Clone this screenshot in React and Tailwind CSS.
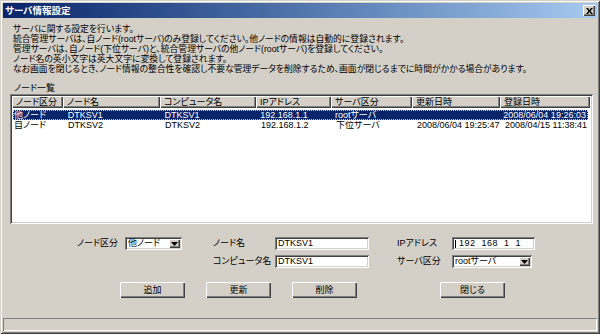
import React from 'react';

const raised = "shadow-[inset_1px_1px_0_#ffffff,inset_-1px_-1px_0_#404040,inset_-2px_-2px_0_#808080]";
const sunken = "shadow-[inset_1px_1px_0_#808080,inset_-1px_-1px_0_#ffffff,inset_2px_2px_0_#404040,inset_-2px_-2px_0_#d4d0c8]";

function Arrow() {
  return (
    <svg width="7" height="4" viewBox="0 0 7 4">
      <path d="M0 0h7L3.5 4z" fill="#000" />
    </svg>
  );
}

function Combo({ value, width }) {
  return (
    <div className={`${sunken} ${width} h-[13px] bg-white flex items-center pl-[3px] pr-[2px]`}>
      <span className="flex-1 leading-none">{value}</span>
      <div className={`${raised} bg-[#d4d0c8] w-[11px] h-[9px] flex items-center justify-center`}>
        <Arrow />
      </div>
    </div>
  );
}

function TextBox({ value, width }) {
  return (
    <div className={`${sunken} ${width} h-[13px] bg-white flex items-center pl-[3px] leading-none`}>
      {value}
    </div>
  );
}

function Btn({ label }) {
  return (
    <div className={`${raised} w-[65px] h-[16px] flex items-center justify-center leading-none`}>
      {label}
    </div>
  );
}

export default function App() {
  const cols = [
    { name: "ノード区分", w: "w-[51px]" },
    { name: "ノード名", w: "w-[97px]" },
    { name: "コンピュータ名", w: "w-[96px]" },
    { name: "IPアドレス", w: "w-[75px]" },
    { name: "サーバ区分", w: "w-[81px]" },
    { name: "更新日時", w: "w-[88px]" },
    { name: "登録日時", w: "w-[90px]" },
  ];

  const rows = [
    ["他ノード", "DTKSV1", "DTKSV1", "192.168.1.1", "rootサーバ", "", "2008/06/04 19:26:03"],
    ["自ノード", "DTKSV2", "DTKSV2", "192.168.1.2", "下位サーバ", "2008/06/04 19:25:47", "2008/04/15 11:38:41"],
  ];

  return (
    <div className="w-[600px] h-[334px] bg-[#d4d0c8] p-[3px] flex flex-col text-[9px] text-black font-['Liberation_Sans','Noto_Sans_CJK_JP',sans-serif] [font-feature-settings:'palt'] shadow-[inset_1px_1px_0_#d4d0c8,inset_-1px_-1px_0_#404040,inset_2px_2px_0_#ffffff,inset_-2px_-2px_0_#808080]">
      {/* title bar */}
      <div className="h-[15px] flex items-center justify-between pl-[2px] pr-[2px] bg-linear-to-r from-[#0a246a] to-[#a6caf0]">
        <span className="text-white font-bold text-[9.5px] leading-none">サーバ情報設定</span>
        <div className={`${raised} bg-[#d4d0c8] w-[12px] h-[11px] flex items-center justify-center`}>
          <svg width="7" height="6" viewBox="0 0 7 6">
            <path d="M0 0h2l1.5 2 1.5-2h2L4.5 3 7 6H5L3.5 4 2 6H0l2.5-3z" fill="#000" />
          </svg>
        </div>
      </div>

      <div className="pl-[10px] pt-[6px] leading-[10px] text-[8.8px]">
        <p>サーバに関する設定を行います。</p>
        <p>統合管理サーバは、自ノード(rootサーバ)のみ登録してください。他ノードの情報は自動的に登録されます。</p>
        <p>管理サーバは、自ノード(下位サーバ)と、統合管理サーバの他ノード(rootサーバ)を登録してください。</p>
        <p>ノード名の英小文字は英大文字に変換して登録されます。</p>
        <p>なお画面を閉じるとき、ノード情報の整合性を確認し不要な管理データを削除するため、画面が閉じるまでに時間がかかる場合があります。</p>
      </div>

      <div className="pl-[11px] mt-[9px] leading-[10px]">ノード一覧</div>

      {/* list */}
      <div className={`${sunken} ml-[7px] mr-[4px] h-[130px] bg-white p-[2px] mt-[1px]`}>
        <div className="flex h-[12px]">
          {cols.map((c) => (
            <div key={c.name} className={`${raised} ${c.w} bg-[#d4d0c8] flex items-center pl-[4px] leading-none`}>
              {c.name}
            </div>
          ))}
        </div>
        <div className="pt-[2px]">
          {rows.map((r, i) => (
            <div
              key={i}
              className={`flex h-[10px] items-center leading-none ml-[1px] ${
                i === 0 ? "bg-[#0a246a] text-white outline-1 outline-dotted outline-[#c8c8c8] -outline-offset-1 w-[575px]" : ""
              }`}
            >
              {r.map((v, j) => (
                <div key={j} className={`${j === 0 ? "pl-[1px] w-[50px]" : `${cols[j].w} pl-[5px]`} whitespace-nowrap overflow-hidden`}>
                  {v}
                </div>
              ))}
            </div>
          ))}
        </div>
      </div>

      {/* form */}
      <div className="flex items-center mt-[13px] pl-[74px] h-[13px]">
        <div className="w-[44px] leading-none">ノード区分</div>
        <div className="ml-[4px]"><Combo value="他ノード" width="w-[57px]" /></div>
        <div className="ml-[31px] w-[62px] leading-none">ノード名</div>
        <TextBox value="DTKSV1" width="w-[94px]" />
        <div className="ml-[28px] w-[55px] leading-none">IPアドレス</div>
        <div className={`${sunken} w-[83px] h-[13px] bg-white flex items-center pl-[3px] leading-none`}>
          <span className="w-[1px] h-[8px] bg-black mr-[3px]" />
          <span className="tracking-[0.5px]">192&nbsp;&nbsp;168&nbsp;&nbsp;1&nbsp;&nbsp;1</span>
        </div>
      </div>
      <div className="flex items-center mt-[5px] pl-[210px] h-[13px]">
        <div className="w-[62px] leading-none">コンピュータ名</div>
        <TextBox value="DTKSV1" width="w-[94px]" />
        <div className="ml-[28px] w-[55px] leading-none">サーバ区分</div>
        <Combo value="rootサーバ" width="w-[80px]" />
      </div>

      {/* buttons */}
      <div className="flex mt-[14px] pl-[117px]">
        <Btn label="追加" />
        <div className="ml-[21px]"><Btn label="更新" /></div>
        <div className="ml-[21px]"><Btn label="削除" /></div>
        <div className="ml-[83px]"><Btn label="閉じる" /></div>
      </div>

      {/* status bar */}
      <div className="mt-auto h-[13px] shadow-[inset_1px_1px_0_#808080,inset_-1px_-1px_0_#ffffff]" />
    </div>
  );
}
